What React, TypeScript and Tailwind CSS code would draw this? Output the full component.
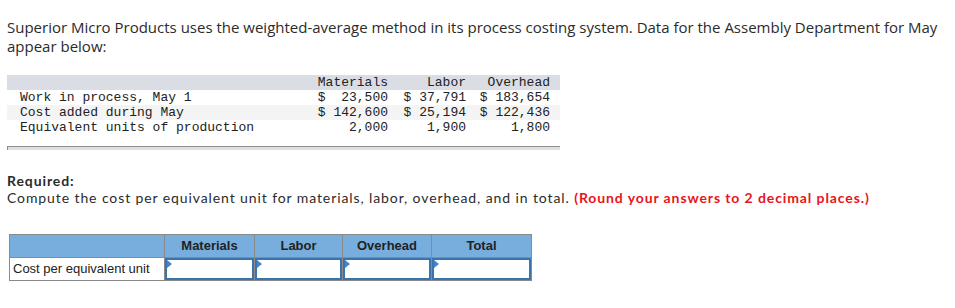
import React from "react";

const rows = [
  { label: "Work in process, May 1", m: "$  23,500", l: "$ 37,791", o: "$ 183,654", bg: "bg-white" },
  { label: "Cost added during May", m: "$ 142,600", l: "$ 25,194", o: "$ 122,436", bg: "bg-[#f4f4f4]" },
  { label: "Equivalent units of production", m: "2,000", l: "1,900", o: "1,800", bg: "bg-white" },
];

function InputCell() {
  return (
    <td className="border border-[#8a8a8a] p-0 h-[23px]">
      <div className="relative w-full h-[22px] border-2 border-[#3b73ab] bg-white">
        <div className="absolute left-0 top-0 w-0 h-0 border-t-[4px] border-b-[4px] border-l-[5px] border-t-transparent border-b-transparent border-l-[#3d86d6]" />
      </div>
    </td>
  );
}

export default function App() {
  const sans = { fontFamily: '"Open Sans", "Liberation Sans", sans-serif' };
  return (
    <div className="w-[955px] h-[308px] bg-white px-[7px] pt-[18px] text-[#333]" style={sans}>
      <p className="text-[15px] leading-[19px] max-w-[940px] text-[#2b2b2b]">
        Superior Micro Products uses the weighted-average method in its process costing system. Data for the Assembly Department for May appear below:
      </p>

      <div
        className="mt-[19px] w-[553px] text-[13px] leading-[15px] text-[#222]"
        style={{ fontFamily: '"Liberation Mono", "Courier New", monospace' }}
      >
        <div className="grid grid-cols-[303px_78px_78px_84px] pr-[10px] bg-[#dadde3] h-[15px]">
          <div />
          <div className="text-right whitespace-pre">Materials</div>
          <div className="text-right whitespace-pre">Labor</div>
          <div className="text-right whitespace-pre">Overhead</div>
        </div>
        {rows.map((r) => (
          <div key={r.label} className={`grid grid-cols-[303px_78px_78px_84px] pr-[10px] h-[15px] ${r.bg}`}>
            <div className="pl-[13px] whitespace-pre">{r.label}</div>
            <div className="text-right whitespace-pre">{r.m}</div>
            <div className="text-right whitespace-pre">{r.l}</div>
            <div className="text-right whitespace-pre">{r.o}</div>
          </div>
        ))}
        <div className="mt-[11px] h-[4px] border-t border-l border-[#8c8c8c] bg-[#dcdfe5]" />
      </div>

      <div
        className="mt-[22px] text-[14px] leading-[17px] tracking-[0.9px] text-[#2b2b2b]"
        style={{ fontFamily: 'Lato, "Open Sans", sans-serif' }}
      >
        <div className="font-bold">Required:</div>
        <div className="whitespace-nowrap">
          Compute the cost per equivalent unit for materials, labor, overhead, and in total.{" "}
          <span className="font-bold text-[#e8141c]">(Round your answers to 2 decimal places.)</span>
        </div>
      </div>

      <table
        className="mt-[28px] ml-[2px] border-collapse text-[13px] text-[#222] table-fixed"
        style={{ fontFamily: '"Liberation Sans", Arial, sans-serif' }}
      >
        <thead>
          <tr className="bg-[#77aedd]">
            <th className="border border-[#8a8a8a] w-[155px] h-[23px]" />
            <th className="border border-[#8a8a8a] w-[90px] h-[23px] font-bold">Materials</th>
            <th className="border border-[#8a8a8a] w-[88px] h-[23px] font-bold">Labor</th>
            <th className="border border-[#8a8a8a] w-[89px] h-[23px] font-bold">Overhead</th>
            <th className="border border-[#8a8a8a] w-[100px] h-[23px] font-bold">Total</th>
          </tr>
        </thead>
        <tbody>
          <tr>
            <td className="border border-[#8a8a8a] pl-[3px] h-[23px] text-left whitespace-nowrap">Cost per equivalent unit</td>
            <InputCell />
            <InputCell />
            <InputCell />
            <InputCell />
          </tr>
        </tbody>
      </table>
    </div>
  );
}
